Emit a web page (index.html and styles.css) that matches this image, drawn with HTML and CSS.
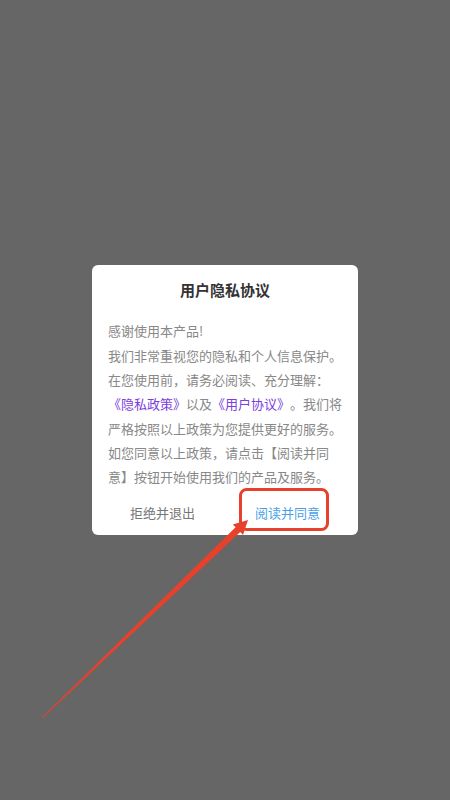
FILE: index.html
```html
<!DOCTYPE html>
<html lang="zh-CN">
<head>
<meta charset="utf-8">
<title>用户隐私协议</title>
<link rel="stylesheet" href="styles.css">
</head>
<body>
<div class="mask">
  <div class="dialog">
    <div class="title">用户隐私协议</div>
    <p class="content">感谢使用本产品!<br>我们非常重视您的隐私和个人信息保护。<br>在您使用前，请务必阅读、充分理解：<br><span class="link">《隐私政策》</span>以及<span class="link">《用户协议》</span>。我们将<br>严格按照以上政策为您提供更好的服务。<br>如您同意以上政策，请点击【阅读并同<br>意】按钮开始使用我们的产品及服务。</p>
    <div class="actions">
      <div class="btn btn-reject">拒绝并退出</div>
      <div class="btn btn-agree">阅读并同意</div>
    </div>
  </div>
</div>
<svg class="annot" width="450" height="800" viewBox="0 0 450 800">
  <rect x="240.5" y="489.5" width="87" height="40" rx="6" ry="6" fill="none" stroke="#e8412b" stroke-width="3"/>
  <polygon fill="#e8412b" points="41.65,717.64 235.6,527.3 232.8,524.5 248,520 243.0,534.9 240.2,532.1 42.35,718.36"/>
</svg>
</body>
</html>
```
FILE: styles.css
```css
html, body {
  margin: 0;
  padding: 0;
}
body {
  width: 450px;
  height: 800px;
  background: #666666;
  font-family: "Noto Sans CJK SC", "Noto Sans", sans-serif;
  position: relative;
  overflow: hidden;
}
.mask {
  width: 450px;
  height: 800px;
  display: flex;
  align-items: center;
  justify-content: center;
}
.dialog {
  width: 266px;
  background: #ffffff;
  border-radius: 6px;
  display: flex;
  flex-direction: column;
}
.title {
  padding-top: 15px;
  height: 20px;
  line-height: 20px;
  text-align: center;
  font-size: 15px;
  font-weight: bold;
  color: #333333;
}
.content {
  margin: 19px 0 0;
  padding: 0 16px;
  font-size: 13px;
  line-height: 24.3px;
  color: #888888;
  white-space: nowrap;
  text-spacing-trim: space-all;
  font-kerning: none;
  font-feature-settings: "kern" 0, "chws" 0, "halt" 0, "palt" 0;
}
.link {
  color: #7b3de0;
}
.actions {
  display: flex;
  padding: 0 8px;
  height: 45px;
}
.btn {
  flex: 1;
  display: flex;
  align-items: center;
  justify-content: center;
  font-size: 13px;
}
.btn-reject {
  color: #777777;
}
.btn-agree {
  color: #4a9fe6;
}
.annot {
  position: absolute;
  left: 0;
  top: 0;
  pointer-events: none;
}
```
